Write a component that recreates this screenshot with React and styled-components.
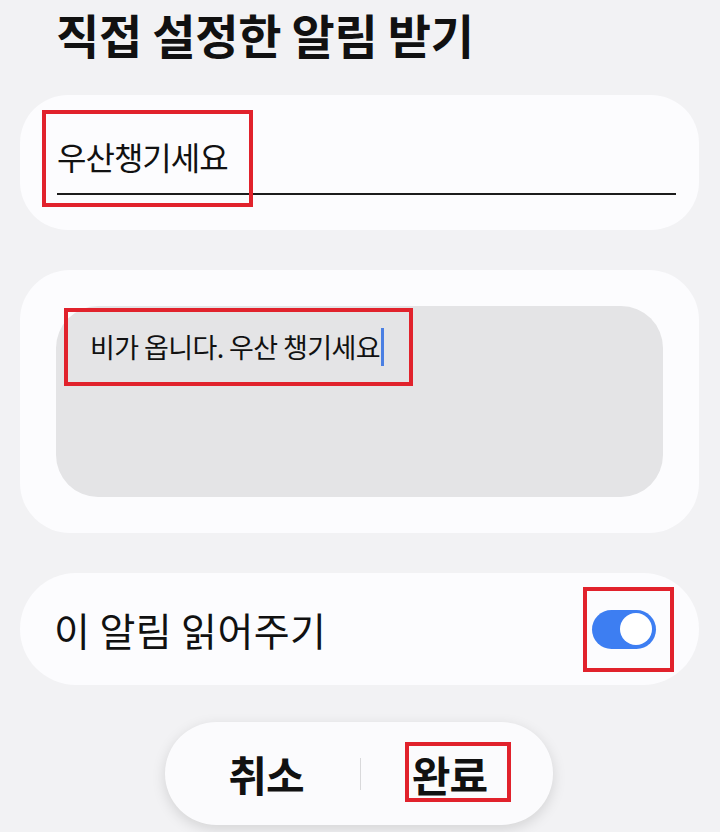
import React from 'react'
import styled, { createGlobalStyle } from 'styled-components'

const GlobalStyle = createGlobalStyle`
  html, body {
    margin: 0;
    padding: 0;
    background: #f2f2f4;
  }
  body {
    font-family: "Noto Sans CJK KR", "Noto Sans", sans-serif;
    color: #111;
  }
`

const Screen = styled.div`
  width: 720px;
  height: 832px;
  overflow: hidden;
  box-sizing: border-box;
  padding: 0 21px 0 20px;
  display: flex;
  flex-direction: column;
`

const Title = styled.h1`
  margin: 0;
  height: 95px;
  padding-left: 36px;
  font-size: 47px;
  font-weight: 700;
  line-height: 68px;
  letter-spacing: -0.3px;
`

const Card = styled.section`
  position: relative;
  background: #fcfcfe;
  border-radius: ${p => p.$radius}px;
  margin-bottom: 40px;
  box-sizing: border-box;
`

const NameCard = styled(Card)`
  height: 135px;
  padding: 39px 23px 0 37px;
`

const NameField = styled.div`
  border-bottom: 2px solid #1c1c1c;
  padding-bottom: 14px;
  font-size: 32px;
  line-height: 45px;
  letter-spacing: -1px;
`

const MessageCard = styled(Card)`
  height: 263px;
  padding: 36px;
`

const MessageBox = styled.div`
  height: 100%;
  background: #e4e4e6;
  border-radius: 42px;
  padding: 21px 34px;
  box-sizing: border-box;
`

const MessageLine = styled.div`
  display: flex;
  align-items: center;
  font-size: 27px;
  line-height: 40px;
  letter-spacing: -0.6px;
`

const Cursor = styled.span`
  display: inline-block;
  width: 3px;
  height: 38px;
  margin-left: 1px;
  background: #4a7fe3;
`

const ReadCard = styled(Card)`
  height: 112px;
  padding: 0 43px 0 34px;
  display: flex;
  align-items: center;
  justify-content: space-between;
`

const ReadLabel = styled.span`
  font-size: 39px;
  letter-spacing: 0.4px;
`

const Switch = styled.span`
  width: 64px;
  height: 39px;
  border-radius: 20px;
  background: #3d7ef2;
  display: flex;
  align-items: center;
  justify-content: ${p => (p.$on ? 'flex-end' : 'flex-start')};
  padding: 0 4px;
  box-sizing: border-box;
`

const Knob = styled.span`
  width: 32px;
  height: 32px;
  border-radius: 50%;
  background: #fff;
`

const ActionBar = styled.div`
  position: relative;
  align-self: center;
  margin-top: -3px;
  margin-left: -2px;
  width: 388px;
  height: 103px;
  border-radius: 52px;
  background: #fbfbfd;
  box-shadow: 0 4px 14px rgba(0, 0, 0, 0.13);
  display: grid;
  grid-template-columns: 195px 1px 1fr;
  align-items: center;
`

const Action = styled.button`
  border: none;
  background: none;
  padding: 0;
  margin-left: ${p => p.$shift}px;
  font-family: inherit;
  font-size: 42px;
  font-weight: 700;
  color: #111;
  letter-spacing: -0.8px;
`

const Divider = styled.span`
  height: 32px;
  background: #d9d9db;
`

const Mark = styled.span`
  position: absolute;
  left: ${p => p.$x}px;
  top: ${p => p.$y}px;
  width: ${p => p.$w}px;
  height: ${p => p.$h}px;
  border: 4px solid #e1222c;
  box-sizing: border-box;
  pointer-events: none;
`

export default function App() {
  return (
    <>
      <GlobalStyle />
      <Screen>
        <Title>직접 설정한 알림 받기</Title>

        <NameCard $radius={48}>
          <NameField>우산챙기세요</NameField>
          <Mark $x={22} $y={15} $w={211} $h={97} />
        </NameCard>

        <MessageCard $radius={50}>
          <MessageBox>
            <MessageLine>
              비가 옵니다. 우산 챙기세요
              <Cursor />
            </MessageLine>
          </MessageBox>
          <Mark $x={44} $y={38} $w={349} $h={78} />
        </MessageCard>

        <ReadCard $radius={56}>
          <ReadLabel>이 알림 읽어주기</ReadLabel>
          <Switch $on>
            <Knob />
          </Switch>
          <Mark $x={563} $y={14} $w={91} $h={85} />
        </ReadCard>

        <ActionBar>
          <Action $shift={8}>취소</Action>
          <Divider />
          <Action $shift={-14}>완료</Action>
          <Mark $x={240} $y={20} $w={106} $h={60} />
        </ActionBar>
      </Screen>
    </>
  )
}
